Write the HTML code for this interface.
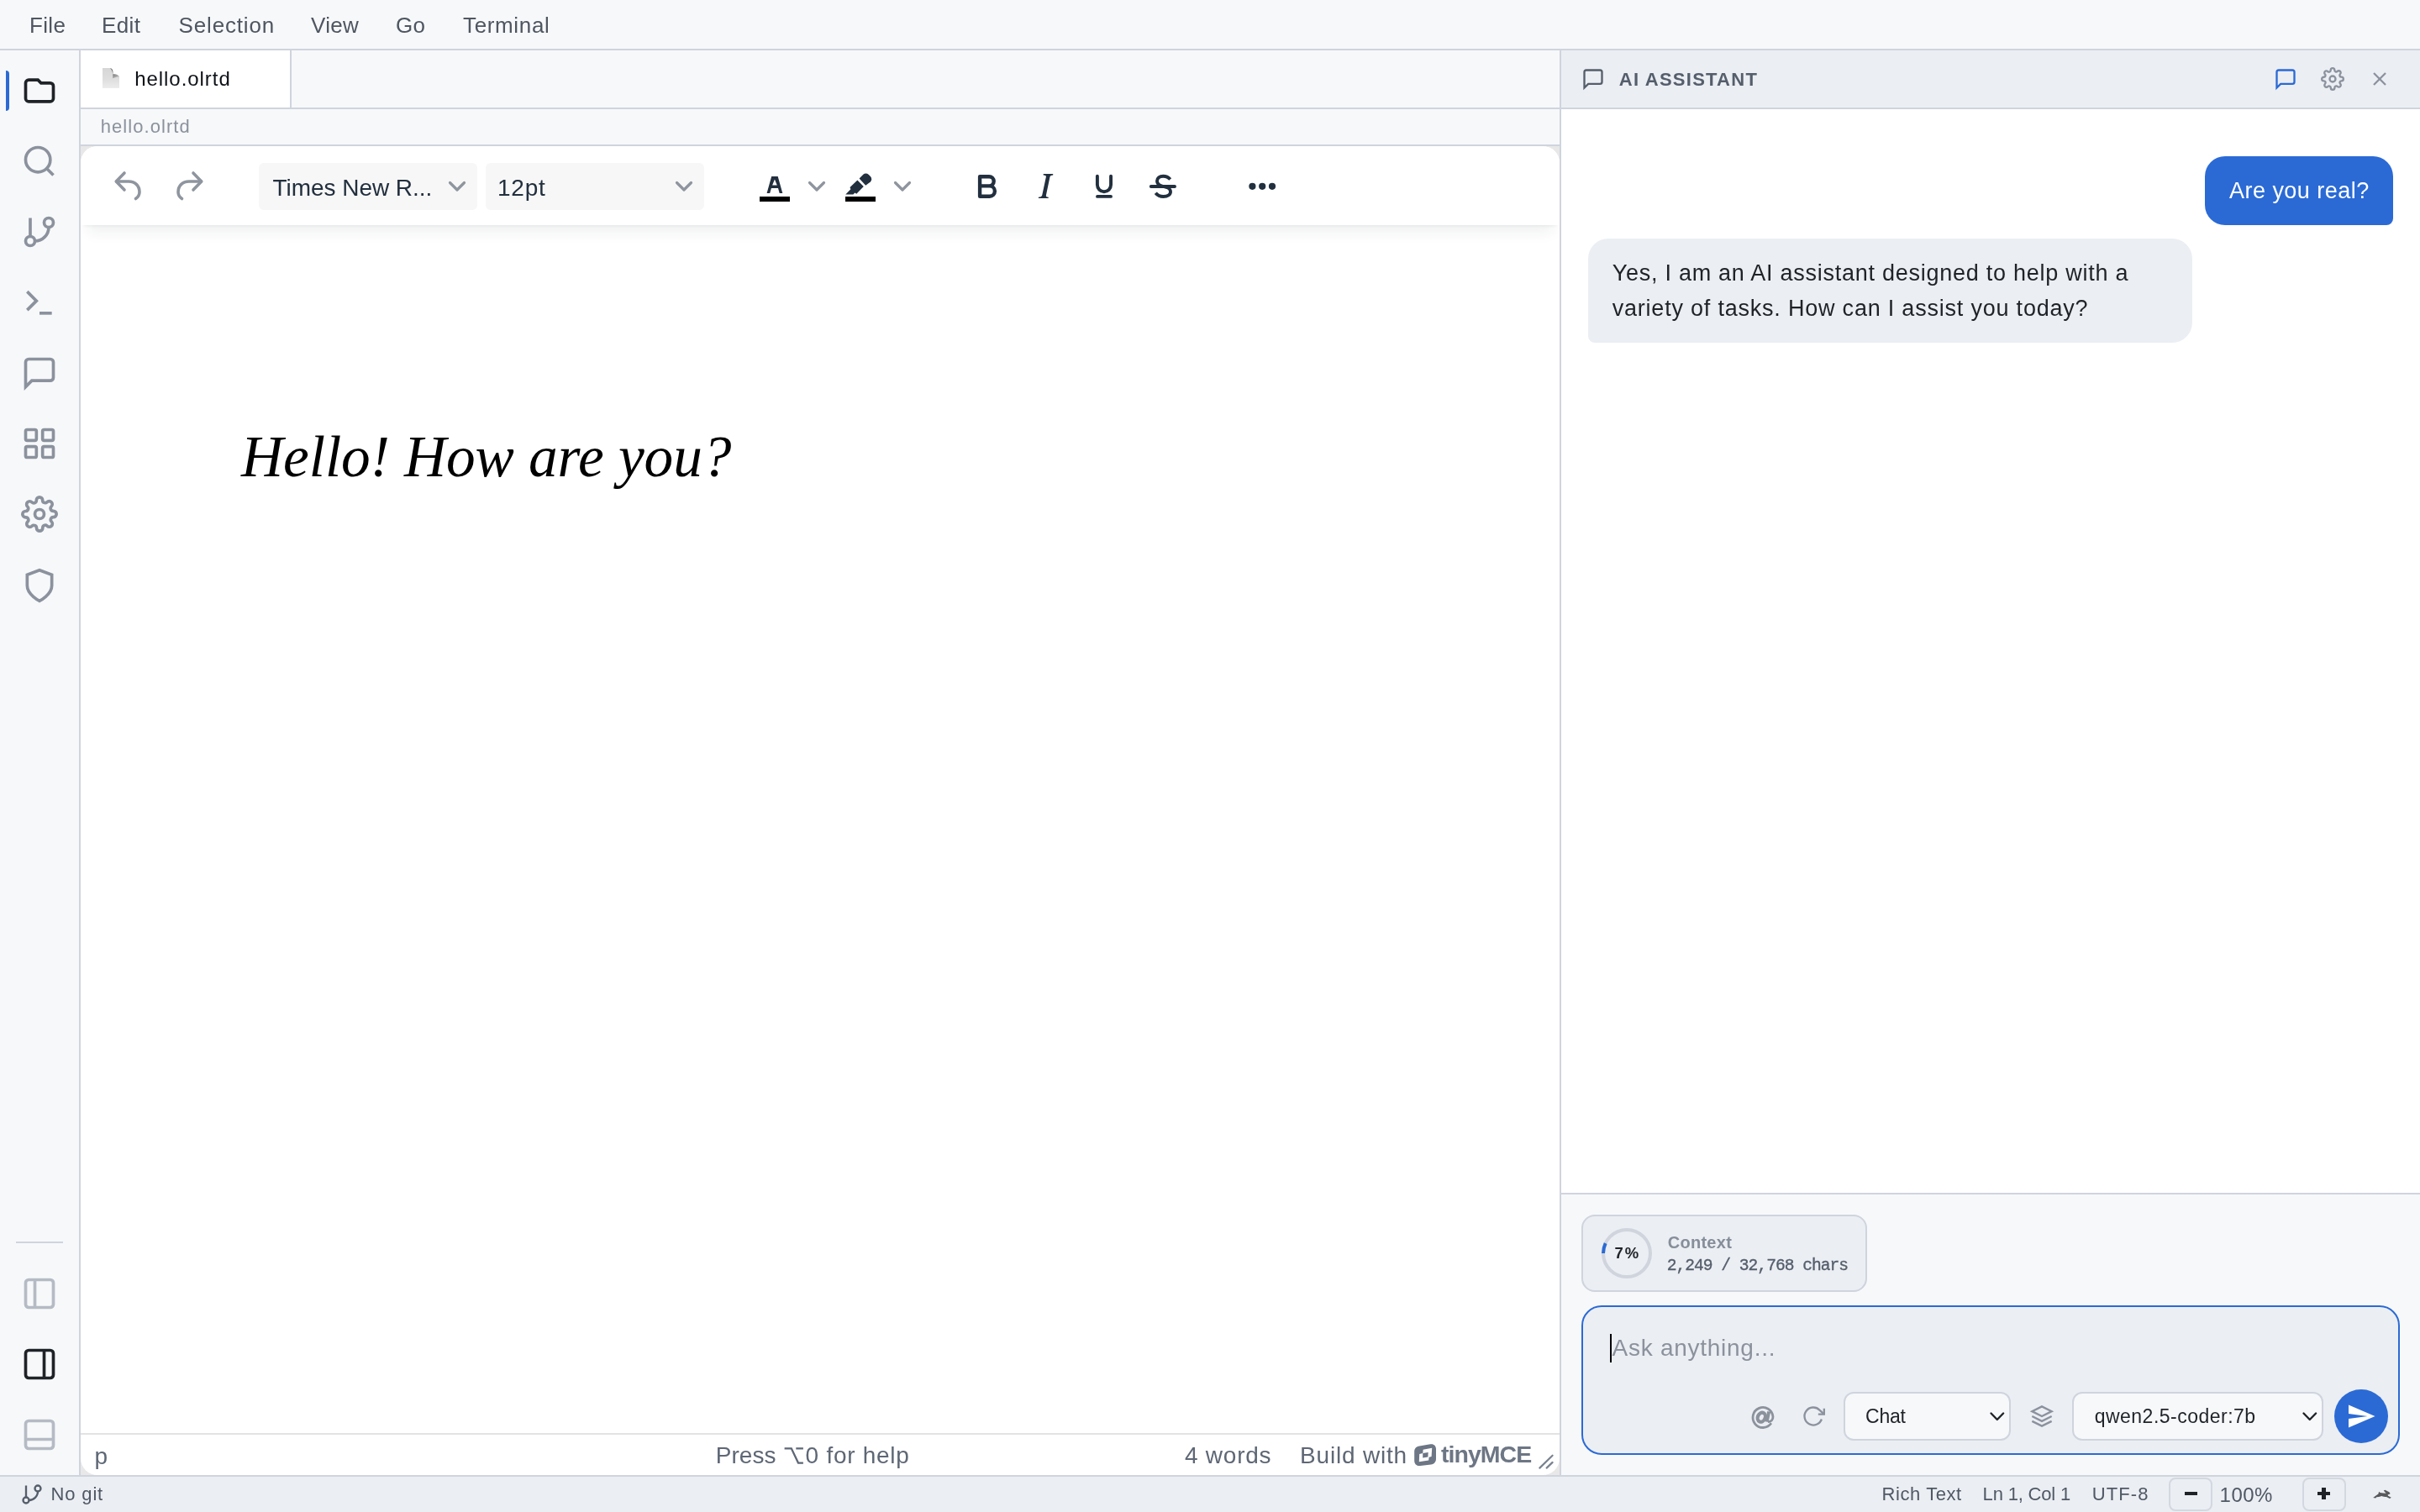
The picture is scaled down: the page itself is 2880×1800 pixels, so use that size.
<!DOCTYPE html>
<html><head><meta charset="utf-8"><title>Editor</title>
<style>
*{box-sizing:border-box;margin:0;padding:0}
html,body{width:2880px;height:1800px;overflow:hidden;background:#f7f8fa;font-family:"Liberation Sans",sans-serif}
#app{position:relative;width:2880px;height:1800px;overflow:hidden;background:#f7f8fa}
.b{position:absolute}
.t{position:absolute;white-space:pre;display:block}
.i{position:absolute;overflow:visible}
</style></head><body><div id="app">
<!-- menubar border -->
<div class="b" style="left:0;top:58px;width:2880px;height:2px;background:#cfd4dd"></div>
<!-- sidebar border -->
<div class="b" style="left:94px;top:60px;width:2px;height:1696px;background:#cfd4dd"></div>
<!-- sidebar active marker -->
<div class="b" style="left:7px;top:84px;width:4px;height:48px;background:#2b6ad5;border-radius:0 4px 4px 0"></div>
<div class="b" style="left:19px;top:1478px;width:56px;height:2px;background:#cfd4dd"></div>
<svg class="i" style="left:25px;top:86px" width="44" height="44" viewBox="0 0 24 24" fill="none" stroke="#1f2328" stroke-width="2" ><path d="M3 7v10a2 2 0 0 0 2 2h14a2 2 0 0 0 2-2V9a2 2 0 0 0-2-2h-6l-2-2H5a2 2 0 0 0-2 2z"/></svg>
<svg class="i" style="left:25px;top:170px" width="44" height="44" viewBox="0 0 24 24" fill="none" stroke="#8b929d" stroke-width="2" ><circle cx="11" cy="11" r="8"/><line x1="21" y1="21" x2="16.65" y2="16.65"/></svg>
<svg class="i" style="left:25px;top:254px" width="44" height="44" viewBox="0 0 24 24" fill="none" stroke="#8b929d" stroke-width="2" ><line x1="6" y1="3" x2="6" y2="15"/><circle cx="18" cy="6" r="3"/><circle cx="6" cy="18" r="3"/><path d="M18 9a9 9 0 0 1-9 9"/></svg>
<svg class="i" style="left:25px;top:338px" width="44" height="44" viewBox="0 0 24 24" fill="none" stroke="#8b929d" stroke-width="2" ><polyline points="4 17 10 11 4 5"/><line x1="12" y1="19" x2="20" y2="19"/></svg>
<svg class="i" style="left:25px;top:422px" width="44" height="44" viewBox="0 0 24 24" fill="none" stroke="#8b929d" stroke-width="2" ><path d="M21 15a2 2 0 0 1-2 2H7l-4 4V5a2 2 0 0 1 2-2h14a2 2 0 0 1 2 2z"/></svg>
<svg class="i" style="left:25px;top:506px" width="44" height="44" viewBox="0 0 24 24" fill="none" stroke="#8b929d" stroke-width="2" ><rect x="3" y="3" width="7" height="7" rx="1"/><rect x="14" y="3" width="7" height="7" rx="1"/><rect x="14" y="14" width="7" height="7" rx="1"/><rect x="3" y="14" width="7" height="7" rx="1"/></svg>
<svg class="i" style="left:25px;top:590px" width="44" height="44" viewBox="0 0 24 24" fill="none" stroke="#8b929d" stroke-width="2" ><circle cx="12" cy="12" r="3"/><path d="M19.4 15a1.65 1.65 0 0 0 .33 1.82l.06.06a2 2 0 0 1 0 2.83 2 2 0 0 1-2.83 0l-.06-.06a1.65 1.65 0 0 0-1.82-.33 1.65 1.65 0 0 0-1 1.51V21a2 2 0 0 1-2 2 2 2 0 0 1-2-2v-.09A1.65 1.65 0 0 0 9 19.4a1.65 1.65 0 0 0-1.82.33l-.06.06a2 2 0 0 1-2.83 0 2 2 0 0 1 0-2.83l.06-.06a1.65 1.65 0 0 0 .33-1.82 1.65 1.65 0 0 0-1.51-1H3a2 2 0 0 1-2-2 2 2 0 0 1 2-2h.09A1.65 1.65 0 0 0 4.6 9a1.65 1.65 0 0 0-.33-1.82l-.06-.06a2 2 0 0 1 0-2.83 2 2 0 0 1 2.83 0l.06.06a1.65 1.65 0 0 0 1.82.33H9a1.65 1.65 0 0 0 1-1.51V3a2 2 0 0 1 2-2 2 2 0 0 1 2 2v.09a1.65 1.65 0 0 0 1 1.51 1.65 1.65 0 0 0 1.82-.33l.06-.06a2 2 0 0 1 2.83 0 2 2 0 0 1 0 2.83l-.06.06a1.65 1.65 0 0 0-.33 1.82V9a1.65 1.65 0 0 0 1.51 1H21a2 2 0 0 1 2 2 2 2 0 0 1-2 2h-.09a1.65 1.65 0 0 0-1.51 1z"/></svg>
<svg class="i" style="left:25px;top:675.4px" width="44" height="44" viewBox="0 0 24 24" fill="none" stroke="#8b929d" stroke-width="2" ><path d="M12 22s8-4 8-10V5l-8-3-8 3v7c0 6 8 10 8 10z"/></svg>
<svg class="i" style="left:25px;top:1518px" width="44" height="44" viewBox="0 0 24 24" fill="none" stroke="#b5bbc4" stroke-width="2" ><rect x="3" y="3" width="18" height="18" rx="2"/><line x1="9" y1="3" x2="9" y2="21"/></svg>
<svg class="i" style="left:25px;top:1602px" width="44" height="44" viewBox="0 0 24 24" fill="none" stroke="#1f2328" stroke-width="2" ><rect x="3" y="3" width="18" height="18" rx="2"/><line x1="15" y1="3" x2="15" y2="21"/></svg>
<svg class="i" style="left:25px;top:1686px" width="44" height="44" viewBox="0 0 24 24" fill="none" stroke="#b5bbc4" stroke-width="2" ><rect x="3" y="3" width="18" height="18" rx="2"/><line x1="3" y1="15" x2="21" y2="15"/></svg>
<!-- tab bar -->
<div class="b" style="left:96px;top:60px;width:249px;height:68px;background:#fff"></div>
<div class="b" style="left:345px;top:60px;width:2px;height:68px;background:#cfd4dd"></div>
<div class="b" style="left:96px;top:128px;width:1760px;height:2px;background:#cfd4dd"></div>
<!-- file icon -->
<svg class="i" style="left:122px;top:81px" width="20" height="24" viewBox="0 0 20 24">
<defs><linearGradient id="fg" x1="0" y1="0" x2="0" y2="1"><stop offset="0" stop-color="#d6d6d6"/><stop offset="0.55" stop-color="#dedede"/><stop offset="1" stop-color="#ececec"/></linearGradient>
<linearGradient id="fc" x1="0.2" y1="0" x2="0.8" y2="1"><stop offset="0" stop-color="#5f5f5f"/><stop offset="0.6" stop-color="#8a8a8a"/><stop offset="1" stop-color="#c4c4c4"/></linearGradient></defs>
<path d="M0 0H9.5C12.3 0.8 12.7 3.5 12.4 7.2C15.5 6.9 18.6 7.6 20 10.2V24H0Z" fill="url(#fg)"/>
<path d="M9 0C12.3 0.8 12.7 3.5 12.4 7.2C15.5 6.9 18.6 7.6 20 10.2C17.5 10.6 14.5 11 12.2 12.2C12.6 8 12.4 3 9 0Z" fill="url(#fc)"/>
</svg>
<!-- breadcrumb -->
<div class="b" style="left:96px;top:172px;width:1760px;height:2px;background:#cfd4dd"></div>
<!-- tinymce container -->
<div class="b" style="left:96px;top:174px;width:1760px;height:1582px;background:#e8e8e8"></div>
<div class="b" style="left:96px;top:174px;width:1760px;height:1582px;background:#fff;border-radius:20px;overflow:hidden">
  <div class="b" style="left:0;top:94px;width:1760px;height:1438px;background:#fff"></div>
  <div class="b" style="left:0;top:0;width:1760px;height:94px;background:#fff;box-shadow:0 4px 4px -4px rgba(34,47,62,.1),0 16px 16px -8px rgba(34,47,62,.07)"></div>
  <div class="b" style="left:0;top:1532px;width:1760px;height:2px;background:#e3e3e3"></div>
</div>
<!-- toolbar selects -->
<div class="b" style="left:308px;top:194px;width:260px;height:56px;background:#f7f7f7;border-radius:6px"></div>
<div class="b" style="left:578px;top:194px;width:260px;height:56px;background:#f7f7f7;border-radius:6px"></div>
<svg class="i" style="left:0;top:0" width="2880" height="1800" viewBox="0 0 2880 1800" fill="none">
 <!-- undo / redo -->
 <g stroke="#8e959e" stroke-width="3.6" stroke-linecap="round" stroke-linejoin="round">
  <path d="M148 206L138.3 216L148 226"/><path d="M138.5 216H153C161 216 166 221.5 166 228.5C166 232 164.5 234.5 161.5 236.5"/>
  <path d="M230 206L239.7 216L230 226"/><path d="M239.5 216H225C217 216 212 221.5 212 228.5C212 232 213.5 234.5 216.5 236.5"/>
 </g>
 <!-- chevrons -->
 <g stroke="#8e959e" stroke-width="3.2" stroke-linecap="round" stroke-linejoin="round">
  <path d="M535.5 217.5L544 226L552.5 217.5"/><path d="M805.5 217.5L814 226L822.5 217.5"/>
  <path d="M963.5 217.5L972 226L980.5 217.5"/><path d="M1065.5 217.5L1074 226L1082.5 217.5"/>
 </g>
 <!-- text color A -->
 <path d="M918.2 210H925.7L931.3 230.1H927.7L926 223.9H917.9L916.2 230.1H912.6ZM921.95 213.6L924.8 220.4H919.1Z" fill="#222f3e" fill-rule="evenodd"/>
 <rect x="904" y="234" width="36" height="6" fill="#000"/>
 <!-- highlighter -->
 <path d="M1022.6 212.5L1027.3 207.8A4.5 4.5 0 0 1 1033.6 207.8L1035.9 210.1A4.5 4.5 0 0 1 1035.9 216.4L1030.2 220.7Z" fill="#222f3e"/>
 <path d="M1020.4 214.5L1027.8 221.9L1019.3 230.8L1017.3 229.4L1015.4 231.5H1006.3L1012.4 225.2L1011.5 223Z" fill="#222f3e"/>
 <rect x="1006" y="234" width="36" height="6" fill="#000"/>
 <!-- B -->
 <path d="M1166.1 210.2H1177.1A5.6 5.6 0 0 1 1177.1 221.4H1177.7A6.2 6.2 0 0 1 1177.7 233.8H1166.1ZM1166.1 221.4H1177.4" stroke="#222f3e" stroke-width="4.4" stroke-linejoin="round"/>
 <path d="M1241.7 207.1H1253.2V208.4C1251 208.6 1249.9 209 1249.5 210.5L1244.9 232.5C1244.7 234 1245.5 234.6 1247.7 234.8V236.1H1235.9V234.8C1238.2 234.6 1239.6 234 1240.2 232.5L1244.9 210.5C1245.2 209 1244 208.6 1241.7 208.4Z" fill="#222f3e"/>
 <!-- U -->
 <g stroke="#222f3e" stroke-width="3.9" stroke-linecap="round"><path d="M1305.9 209.8V220.1A8.07 8.07 0 0 0 1322.05 220.1V209.8"/><path d="M1306 233.9H1322"/></g>
 <!-- S -->
 <path d="M1369.8 222H1398" stroke="#222f3e" stroke-width="3.9" stroke-linecap="round"/>
 <path d="M1392.7 213.5C1390.5 211 1388 209.7 1384.3 209.7C1380 209.7 1377 212 1377 215.5C1377 218.5 1379.5 220.5 1383 221.5L1388 223C1391.5 224 1393 226 1393 228.3C1393 231.8 1389.5 234 1384.5 234C1380.5 234 1377.5 232.5 1375.3 229.7" stroke="#222f3e" stroke-width="3.9"/>
 <!-- more -->
 <g fill="#222f3e"><circle cx="1490.4" cy="221.8" r="4.1"/><circle cx="1502.2" cy="221.8" r="4.1"/><circle cx="1514" cy="221.8" r="4.1"/></g>
 <!-- option key glyph -->
 <g stroke="#5e6775" stroke-width="2.3"><path d="M933.6 1724.3H941.8L950 1741.6H955.9M947.3 1724.3H955.9"/></g>
 <!-- tiny logo -->
 <g transform="translate(1683.2 1719)">
  <path d="M6 2.6L19 0.3C23 -0.4 25.8 2 25.8 6V17.5C25.8 21.5 23.5 24 19.8 24.6L7 26C3 26.5 0 24 0 20V9C0 5.5 2.5 3.2 6 2.6Z" fill="#6d7684"/>
  <path d="M10.4 6.8L21 4.8L20.4 15L17.4 15.7L17 19.4L5.6 21.3L6 11.9L10.1 11.1Z" fill="#fff"/>
  <path d="M10.1 11.1L16.5 9.9L16.2 15.4L10 16.5Z" fill="#6d7684"/>
 </g>
 <!-- resize handle -->
 <g stroke="#7a8290" stroke-width="2.2" stroke-linecap="round"><path d="M1832.3 1747.6L1847.6 1732.7"/><path d="M1840.6 1747.6L1847.6 1740.9"/></g>
</svg>
<!-- italic I -->


<!-- right panel -->
<div class="b" style="left:1856px;top:60px;width:2px;height:1696px;background:#cfd4dd"></div>
<div class="b" style="left:1858px;top:60px;width:1022px;height:68px;background:#ebeef3"></div>
<div class="b" style="left:1858px;top:128px;width:1022px;height:2px;background:#cfd4dd"></div>
<div class="b" style="left:1858px;top:130px;width:1022px;height:1290px;background:#fff"></div>
<div class="b" style="left:1858px;top:1420px;width:1022px;height:2px;background:#cfd4dd"></div>
<svg class="i" style="left:1882px;top:80px" width="28" height="28" viewBox="0 0 24 24" fill="none" stroke="#555e6b" stroke-width="2" ><path d="M21 15a2 2 0 0 1-2 2H7l-4 4V5a2 2 0 0 1 2-2h14a2 2 0 0 1 2 2z"/></svg>
<svg class="i" style="left:2706px;top:80px" width="28" height="28" viewBox="0 0 24 24" fill="none" stroke="#2b6ad5" stroke-width="2" ><path d="M21 15a2 2 0 0 1-2 2H7l-4 4V5a2 2 0 0 1 2-2h14a2 2 0 0 1 2 2z"/></svg>
<svg class="i" style="left:2762px;top:80px" width="28" height="28" viewBox="0 0 24 24" fill="none" stroke="#8b929d" stroke-width="2" ><circle cx="12" cy="12" r="3"/><path d="M19.4 15a1.65 1.65 0 0 0 .33 1.82l.06.06a2 2 0 0 1 0 2.83 2 2 0 0 1-2.83 0l-.06-.06a1.65 1.65 0 0 0-1.82-.33 1.65 1.65 0 0 0-1 1.51V21a2 2 0 0 1-2 2 2 2 0 0 1-2-2v-.09A1.65 1.65 0 0 0 9 19.4a1.65 1.65 0 0 0-1.82.33l-.06.06a2 2 0 0 1-2.83 0 2 2 0 0 1 0-2.83l.06-.06a1.65 1.65 0 0 0 .33-1.82 1.65 1.65 0 0 0-1.51-1H3a2 2 0 0 1-2-2 2 2 0 0 1 2-2h.09A1.65 1.65 0 0 0 4.6 9a1.65 1.65 0 0 0-.33-1.82l-.06-.06a2 2 0 0 1 0-2.83 2 2 0 0 1 2.83 0l.06.06a1.65 1.65 0 0 0 1.82.33H9a1.65 1.65 0 0 0 1-1.51V3a2 2 0 0 1 2-2 2 2 0 0 1 2 2v.09a1.65 1.65 0 0 0 1 1.51 1.65 1.65 0 0 0 1.82-.33l.06-.06a2 2 0 0 1 2.83 0 2 2 0 0 1 0 2.83l-.06.06a1.65 1.65 0 0 0-.33 1.82V9a1.65 1.65 0 0 0 1.51 1H21a2 2 0 0 1 2 2 2 2 0 0 1-2 2h-.09a1.65 1.65 0 0 0-1.51 1z"/></svg>
<svg class="i" style="left:2818px;top:80px" width="28" height="28" viewBox="0 0 24 24" fill="none" stroke="#8b929d" stroke-width="2" ><line x1="18" y1="6" x2="6" y2="18"/><line x1="6" y1="6" x2="18" y2="18"/></svg>
<!-- bubbles -->
<div class="b" style="left:2624px;top:186px;width:224px;height:82px;background:#2b6ad5;border-radius:24px 24px 8px 24px"></div>
<div class="b" style="left:1890px;top:284px;width:719px;height:124px;background:#ebeef3;border-radius:24px 24px 24px 8px"></div>
<!-- context box -->
<div class="b" style="left:1882px;top:1446px;width:340px;height:92px;background:#ebeef3;border:2px solid #cfd4dd;border-radius:16px"></div>
<svg class="i" style="left:1903.5px;top:1460px" width="64" height="64" viewBox="0 0 64 64" fill="none">
 <circle cx="32" cy="32" r="28" stroke="#cfd4dd" stroke-width="4"/>
 <path d="M4 32A28 28 0 0 1 6.67 20.08" stroke="#2b6ad5" stroke-width="4"/>
</svg>
<!-- input box -->
<div class="b" style="left:1882px;top:1554px;width:974px;height:178px;background:#ebeef3;border:2px solid #2b6ad5;border-radius:24px"></div>
<div class="b" style="left:1916px;top:1588px;width:2px;height:34px;background:#000"></div>
<svg class="i" style="left:0;top:0" width="2880" height="1800" viewBox="0 0 2880 1800" fill="none" stroke="#8b929c">
 <path d="M2107.9 1694.3A12 12 0 1 1 2109.95 1686.4C2110.2 1690 2108 1692.7 2104 1692.7" stroke-width="2.8"/>
 <ellipse cx="2096.3" cy="1687.2" rx="4.4" ry="5.7" transform="rotate(24 2096.3 1687.2)" stroke-width="4.2"/>
 <path d="M2105.2 1680.3L2102.6 1692.7" stroke-width="4"/>
</svg>
<svg class="i" style="left:2144px;top:1672px" width="28" height="28" viewBox="0 0 24 24" fill="none" stroke="#8b929d" stroke-width="2" ><polyline points="23 4 23 10 17 10"/><path d="M20.49 15a9 9 0 1 1-2.12-9.36L23 10"/></svg>
<div class="b" style="left:2194px;top:1657px;width:199px;height:58px;background:#f7f8fa;border:2px solid #cfd4dd;border-radius:12px"></div>
<svg class="i" style="left:2416px;top:1672px" width="28" height="28" viewBox="0 0 24 24" fill="none" stroke="#8b929d" stroke-width="2" ><polygon points="12 2 2 7 12 12 22 7 12 2"/><polyline points="2 17 12 22 22 17"/><polyline points="2 12 12 17 22 12"/></svg>
<div class="b" style="left:2466px;top:1657px;width:299px;height:58px;background:#f7f8fa;border:2px solid #cfd4dd;border-radius:12px"></div>
<svg class="i" style="left:0;top:0" width="2880" height="1800" viewBox="0 0 2880 1800" fill="none">
 <g stroke="#1f2328" stroke-width="2.4" stroke-linecap="round" stroke-linejoin="round">
  <path d="M2369.5 1682.5L2376.8 1690L2384.1 1682.5"/><path d="M2741.5 1682.5L2748.8 1690L2756.1 1682.5"/>
 </g>
 <circle cx="2810" cy="1686" r="32" fill="#2b6ad5"/>
 <g transform="translate(2792 1668) scale(1.5)"><path d="M2.01 21L23 12 2.01 3 2 10l15 2-15 2z" fill="#fff"/></g>
</svg>
<!-- statusbar -->
<div class="b" style="left:0;top:1756px;width:2880px;height:2px;background:#cfd4dd"></div>
<div class="b" style="left:0;top:1758px;width:2880px;height:42px;background:#ebeef3"></div>
<svg class="i" style="left:24px;top:1765px" width="28" height="28" viewBox="0 0 24 24" fill="none" stroke="#555e6b" stroke-width="2" ><line x1="6" y1="3" x2="6" y2="15"/><circle cx="18" cy="6" r="3"/><circle cx="6" cy="18" r="3"/><path d="M18 9a9 9 0 0 1-9 9"/></svg>
<div class="b" style="left:2581px;top:1759px;width:52px;height:40px;border:2px solid #d3d8e0;border-radius:8px"></div>
<div class="b" style="left:2740px;top:1759px;width:52px;height:40px;border:2px solid #d3d8e0;border-radius:8px"></div>
<div class="b" style="left:2600px;top:1775.7px;width:15px;height:4.7px;background:#1f2328"></div>
<div class="b" style="left:2758.3px;top:1775.6px;width:15px;height:4.7px;background:#1f2328"></div>
<div class="b" style="left:2763.4px;top:1770.8px;width:4.7px;height:14.2px;background:#1f2328"></div>
<svg class="i" style="left:0;top:0" width="2880" height="1800" viewBox="0 0 2880 1800" fill="none">
 <!-- rabbit -->
 <path d="M2824.2 1782.9L2827.5 1780.5L2830.4 1778.6L2831.1 1775.7L2832.6 1777C2835 1777.2 2837.5 1777.6 2839.6 1777.7L2836.7 1774.6L2838.5 1773.8L2841.8 1775.6C2843.5 1776.2 2844.6 1777.2 2844.3 1778.4L2841.6 1779.5L2842 1780.8L2845.8 1782.8L2844 1784.1L2840 1782C2838 1782 2836 1781.6 2834.5 1781L2831 1782L2828.2 1782.2L2827.4 1783.6Z" fill="#58595b"/>
</svg>
<div style="position:absolute;left:0;top:0;width:2880px;height:1800px;will-change:transform">
<span class="t" id="m1" style='left:35.00px;top:16.99px;font:normal 400 26px/1 "Liberation Sans", sans-serif;color:#4e5661;letter-spacing:0.355px'>File</span>
<span class="t" id="m2" style='left:121.00px;top:16.99px;font:normal 400 26px/1 "Liberation Sans", sans-serif;color:#4e5661;letter-spacing:0.407px'>Edit</span>
<span class="t" id="m3" style='left:212.50px;top:16.99px;font:normal 400 26px/1 "Liberation Sans", sans-serif;color:#4e5661;letter-spacing:0.850px'>Selection</span>
<span class="t" id="m4" style='left:370.00px;top:16.99px;font:normal 400 26px/1 "Liberation Sans", sans-serif;color:#4e5661;letter-spacing:0.297px'>View</span>
<span class="t" id="m5" style='left:471.00px;top:16.99px;font:normal 400 26px/1 "Liberation Sans", sans-serif;color:#4e5661;letter-spacing:0.376px'>Go</span>
<span class="t" id="m6" style='left:551.00px;top:16.99px;font:normal 400 26px/1 "Liberation Sans", sans-serif;color:#4e5661;letter-spacing:0.647px'>Terminal</span>
<span class="t" id="tab" style='left:160.20px;top:82.48px;font:normal 400 24px/1 "Liberation Sans", sans-serif;color:#0d1117;letter-spacing:0.949px'>hello.olrtd</span>
<span class="t" id="crumb" style='left:119.70px;top:140.08px;font:normal 400 22px/1 "Liberation Sans", sans-serif;color:#8b929d;letter-spacing:1.064px'>hello.olrtd</span>
<span class="t" id="fontsel" style='left:324.50px;top:209.60px;font:normal 400 28px/1 "Liberation Sans", sans-serif;color:#222f3e;letter-spacing:-0.041px'>Times New R...</span>
<span class="t" id="sizesel" style='left:592.00px;top:209.60px;font:normal 400 28px/1 "Liberation Sans", sans-serif;color:#222f3e;letter-spacing:0.761px'>12pt</span>
<span class="t" id="doc" style='left:287.00px;top:508.94px;font:italic 400 69.33px/1 "Liberation Serif", serif;color:#000000;letter-spacing:-0.068px'>Hello! How are you?</span>
<span class="t" id="aihdr" style='left:1926.80px;top:84.38px;font:normal 700 22px/1 "Liberation Sans", sans-serif;color:#555e6b;letter-spacing:1.244px'>AI ASSISTANT</span>
<span class="t" id="umsg" style='left:2653.00px;top:213.84px;font:normal 400 27px/1 "Liberation Sans", sans-serif;color:#ffffff;letter-spacing:0.469px'>Are you real?</span>
<span class="t" id="a1" style='left:1918.70px;top:312.44px;font:normal 400 27px/1 "Liberation Sans", sans-serif;color:#1f2328;letter-spacing:0.737px'>Yes, I am an AI assistant designed to help with a</span>
<span class="t" id="a2" style='left:1918.70px;top:353.94px;font:normal 400 27px/1 "Liberation Sans", sans-serif;color:#1f2328;letter-spacing:0.788px'>variety of tasks. How can I assist you today?</span>
<span class="t" id="pct" style='left:1921.40px;top:1482.74px;font:normal 700 18.5px/1 "Liberation Sans", sans-serif;color:#1f2328;letter-spacing:2.011px'>7%</span>
<span class="t" id="ctx" style='left:1984.70px;top:1469.07px;font:normal 700 20px/1 "Liberation Sans", sans-serif;color:#868e99;letter-spacing:0.286px'>Context</span>
<span class="t" id="ctxn" style='left:1983.70px;top:1497.58px;font:normal 400 19.6px/1 "Liberation Mono", monospace;color:#555e6b;letter-spacing:-0.990px;-webkit-text-stroke:0.35px #555e6b'>2,249 / 32,768 chars</span>
<span class="t" id="ask" style='left:1918.50px;top:1591.10px;font:normal 400 28px/1 "Liberation Sans", sans-serif;color:#8b929c;letter-spacing:0.737px'>Ask anything...</span>
<span class="t" id="chat" style='left:2220.00px;top:1674.73px;font:normal 400 23px/1 "Liberation Sans", sans-serif;color:#1f2328;letter-spacing:-0.198px'>Chat</span>
<span class="t" id="model" style='left:2492.70px;top:1674.73px;font:normal 400 23px/1 "Liberation Sans", sans-serif;color:#1f2328;letter-spacing:0.485px'>qwen2.5-coder:7b</span>
<span class="t" id="nogit" style='left:60.60px;top:1768.28px;font:normal 400 22px/1 "Liberation Sans", sans-serif;color:#4f5864;letter-spacing:0.828px'>No git</span>
<span class="t" id="rich" style='left:2239.50px;top:1768.08px;font:normal 400 22px/1 "Liberation Sans", sans-serif;color:#4f5864;letter-spacing:0.580px'>Rich Text</span>
<span class="t" id="lncol" style='left:2359.60px;top:1768.08px;font:normal 400 22px/1 "Liberation Sans", sans-serif;color:#4f5864;letter-spacing:-0.177px'>Ln 1, Col 1</span>
<span class="t" id="utf" style='left:2489.80px;top:1768.08px;font:normal 400 22px/1 "Liberation Sans", sans-serif;color:#4f5864;letter-spacing:1.077px'>UTF-8</span>
<span class="t" id="zoom" style='left:2641.60px;top:1767.68px;font:normal 400 24px/1 "Liberation Sans", sans-serif;color:#4f5864;letter-spacing:0.486px'>100%</span>
<span class="t" id="p" style='left:112.40px;top:1719.60px;font:normal 400 28px/1 "Liberation Sans", sans-serif;color:#5e6775;letter-spacing:0.000px'>p</span>
<span class="t" id="press1" style='left:851.70px;top:1718.90px;font:normal 400 28px/1 "Liberation Sans", sans-serif;color:#5e6775;letter-spacing:0.082px'>Press</span>
<span class="t" id="press2" style='left:958.60px;top:1718.90px;font:normal 400 28px/1 "Liberation Sans", sans-serif;color:#5e6775;letter-spacing:0.725px'>0 for help</span>
<span class="t" id="words" style='left:1410.00px;top:1718.90px;font:normal 400 28px/1 "Liberation Sans", sans-serif;color:#5e6775;letter-spacing:0.760px'>4 words</span>
<span class="t" id="tiny" style='left:1715.10px;top:1717.37px;font:normal 700 28.5px/1 "Liberation Sans", sans-serif;color:#6d7684;letter-spacing:-0.982px'>tinyMCE</span>
<span class="t" id="build" style='left:1547.00px;top:1718.90px;font:normal 400 28px/1 "Liberation Sans", sans-serif;color:#5e6775;letter-spacing:0.815px'>Build with</span>
</div>
</div></body></html>
